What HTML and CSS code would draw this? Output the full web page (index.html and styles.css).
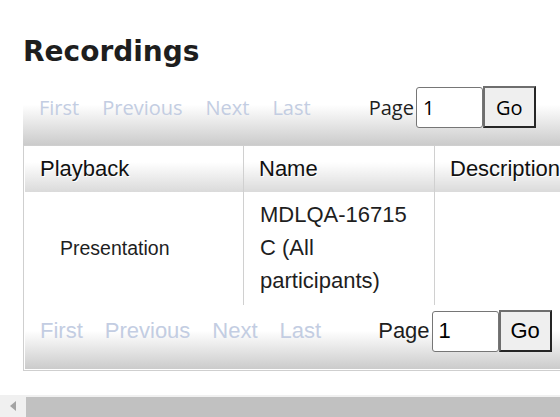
FILE: index.html
```html
<!DOCTYPE html>
<html lang="en">
<head>
    <meta charset="UTF-8">
    <meta name="viewport" content="width=device-width, initial-scale=1.0">
    <title>Recordings</title>
    <link rel="stylesheet" href="styles.css">
</head>
<body>
    <div class="page">
        <h1>Recordings</h1>

        <div class="recordings">
            <div class="pager pager-top">
                <a href="#">First</a>
                <a href="#">Previous</a>
                <a href="#">Next</a>
                <a href="#">Last</a>
                <span class="page-label">Page</span><input class="page-input" type="text" value="1"><button class="go-btn">Go</button>
            </div>

            <div class="grid-box">
                <table class="grid">
                    <thead>
                        <tr>
                            <th class="col-playback">Playback</th>
                            <th class="col-name">Name</th>
                            <th class="col-desc">Description</th>
                        </tr>
                    </thead>
                    <tbody>
                        <tr>
                            <td class="playback"><a href="#">Presentation</a></td>
                            <td class="name">MDLQA-16715 C (All participants)</td>
                            <td></td>
                        </tr>
                    </tbody>
                </table>

                <div class="pager pager-bottom">
                    <a href="#">First</a>
                    <a href="#">Previous</a>
                    <a href="#">Next</a>
                    <a href="#">Last</a>
                    <span class="page-label">Page</span><input class="page-input" type="text" value="1"><button class="go-btn">Go</button>
                </div>
            </div>
        </div>
    </div>

    <!-- horizontal scrollbar of the frame -->
    <div class="hscroll">
        <div class="hscroll-btn"><span class="arrow-left"></span></div>
        <div class="hscroll-thumb"></div>
    </div>
</body>
</html>
```

FILE: styles.css
```css
body {
    margin: 0;
    padding: 0;
    overflow: hidden;
    font-family: "Liberation Sans", Arial, sans-serif;
    color: #111;
}

.page {
    padding: 35px 0 0 23px;
}

h1 {
    margin: 0 0 11px 0;
    font-family: "DejaVu Sans", sans-serif;
    font-size: 28px;
    line-height: 34px;
    font-weight: bold;
    color: #1e1e1e;
}

.recordings {
    width: 720px;
}

.pager {
    display: flex;
    align-items: center;
}

.pager a {
    color: #c3cde2;
    text-decoration: none;
    margin-right: 23px;
}

.page-label {
    color: #1e1e1e;
}

.page-input {
    box-sizing: border-box;
    width: 67px;
    height: 41px;
    margin: 0 0 0 2px;
    padding: 0 6px;
    border: 1px solid #767676;
    border-radius: 3px;
    background: #fff;
    color: #000;
    font: inherit;
}

.go-btn {
    box-sizing: border-box;
    width: 53px;
    height: 42px;
    margin: 0;
    padding: 0;
    border: 2px solid;
    border-color: #6e6e6e #262626 #262626 #6e6e6e;
    background: #efefef;
    color: #000;
    font: inherit;
}

.pager-top {
    font-family: "Open Sans", sans-serif;
    font-size: 20px;
    padding: 6px 0 17px 16px;
    background: linear-gradient(#fff 38%, #cbcbcb);
}

.pager-top a:last-of-type {
    margin-right: 58px;
}

.grid-box {
    border: 1px solid #cfcfcf;
    padding: 0 1px 1px 1px;
}

.grid {
    border-collapse: collapse;
    width: 100%;
    font-size: 22px;
}

.grid th {
    height: 46px;
    padding: 0 0 0 15px;
    text-align: left;
    font-weight: normal;
    text-shadow: 1px 1px 0 #fff;
    background: linear-gradient(#fff 35%, #dadada);
    border-left: 1px solid #d0d0d0;
}

.grid td {
    border-left: 1px solid #d0d0d0;
    vertical-align: middle;
}

.grid th:first-child,
.grid td:first-child {
    border-left: none;
}

.col-playback {
    width: 203px;
}

.col-name {
    width: 175px;
}

.playback {
    padding: 0 0 0 35px;
    font-size: 19.5px;
}

.playback a {
    color: #1e1e1e;
    text-decoration: none;
}

.name {
    padding: 6px 17px 8px 16px;
    line-height: 33px;
    color: #1e1e1e;
}

.pager-bottom {
    font-size: 22px;
    padding: 5px 0 17px 15px;
    background: linear-gradient(#fff 40%, #cbcbcb);
}

.pager-bottom a {
    margin-right: 22px;
}

.pager-bottom a:last-of-type {
    margin-right: 57px;
}

.hscroll {
    display: flex;
    height: 22px;
    margin-top: 24px;
    background: #f0f0f0;
}

.hscroll-btn {
    width: 26px;
    display: flex;
    align-items: center;
    justify-content: center;
}

.arrow-left {
    width: 0;
    height: 0;
    border-top: 5px solid transparent;
    border-bottom: 5px solid transparent;
    border-right: 6px solid #a3a3a3;
}

.hscroll-thumb {
    flex: 1;
    margin-top: 2px;
    background: #c1c1c1;
}
```
